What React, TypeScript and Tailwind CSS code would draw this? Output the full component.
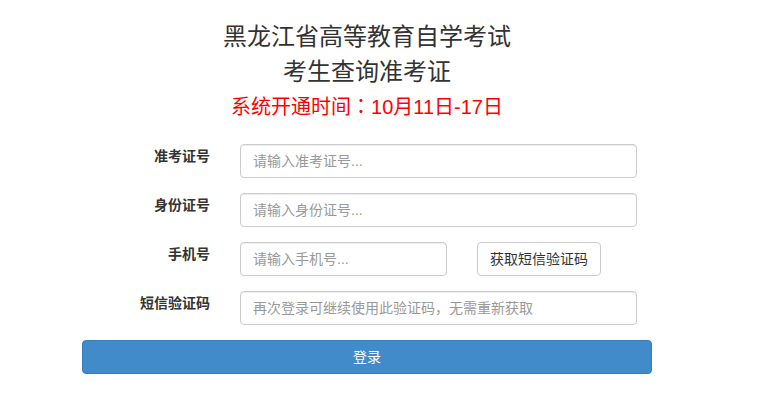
import { useState } from "react";

const FONT = "[font-family:'Liberation_Sans','Noto_Sans_CJK_SC',sans-serif]";

function Field({
  label,
  placeholder,
  value,
  onChange,
  children,
}: {
  label: string;
  placeholder: string;
  value: string;
  onChange: (v: string) => void;
  children?: React.ReactNode;
}) {
  return (
    <div className="flex items-start mb-[15px]">
      <label className="w-[128px] shrink-0 pt-[2px] text-right text-[14px] leading-5 font-bold text-[#333]">
        {label}
      </label>
      <div className="ml-[30px] mr-[15px] flex flex-1 items-start gap-[30px]">
        <input
          type="text"
          value={value}
          onChange={(e) => onChange(e.target.value)}
          placeholder={placeholder}
          className={
            "h-[34px] rounded-[4px] border border-[#ccc] bg-white px-3 text-[14px] text-[#555] shadow-[inset_0_1px_1px_rgba(0,0,0,0.075)] outline-none placeholder:text-[#999] focus:border-[#66afe9] " +
            (children ? "w-[207px]" : "flex-1")
          }
        />
        {children}
      </div>
    </div>
  );
}

export default function App() {
  const [ticket, setTicket] = useState("");
  const [idCard, setIdCard] = useState("");
  const [phone, setPhone] = useState("");
  const [code, setCode] = useState("");

  return (
    <div className={`min-h-screen bg-white ${FONT}`}>
      <div className="ml-[82px] w-[570px] pt-[19px]">
        <div className="text-center text-[24px] leading-[35px] text-[#333]">
          <div>黑龙江省高等教育自学考试</div>
          <div>考生查询准考证</div>
        </div>
        <div className="h-[35px] pt-px text-center text-[20px] leading-[35px] text-[#ff0000]">
          系统开通时间
          <span className="leading-none [font-family:'Noto_Sans_CJK_TC',sans-serif]">：</span>
          10月11日-17日
        </div>

        <form className="mt-[20px]" onSubmit={(e) => e.preventDefault()}>
          <Field
            label="准考证号"
            placeholder="请输入准考证号..."
            value={ticket}
            onChange={setTicket}
          />
          <Field
            label="身份证号"
            placeholder="请输入身份证号..."
            value={idCard}
            onChange={setIdCard}
          />
          <Field
            label="手机号"
            placeholder="请输入手机号..."
            value={phone}
            onChange={setPhone}
          >
            <button
              type="button"
              className="h-[34px] rounded-[4px] border border-[#ccc] bg-white px-3 text-[14px] text-[#333] hover:bg-[#ebebeb]"
            >
              获取短信验证码
            </button>
          </Field>
          <Field
            label="短信验证码"
            placeholder="再次登录可继续使用此验证码，无需重新获取"
            value={code}
            onChange={setCode}
          />
          <button
            type="submit"
            className="h-[34px] w-full rounded-[4px] border border-[#357ebd] bg-[#428bca] text-[14px] text-white hover:bg-[#3071a9]"
          >
            登录
          </button>
        </form>
      </div>
    </div>
  );
}
